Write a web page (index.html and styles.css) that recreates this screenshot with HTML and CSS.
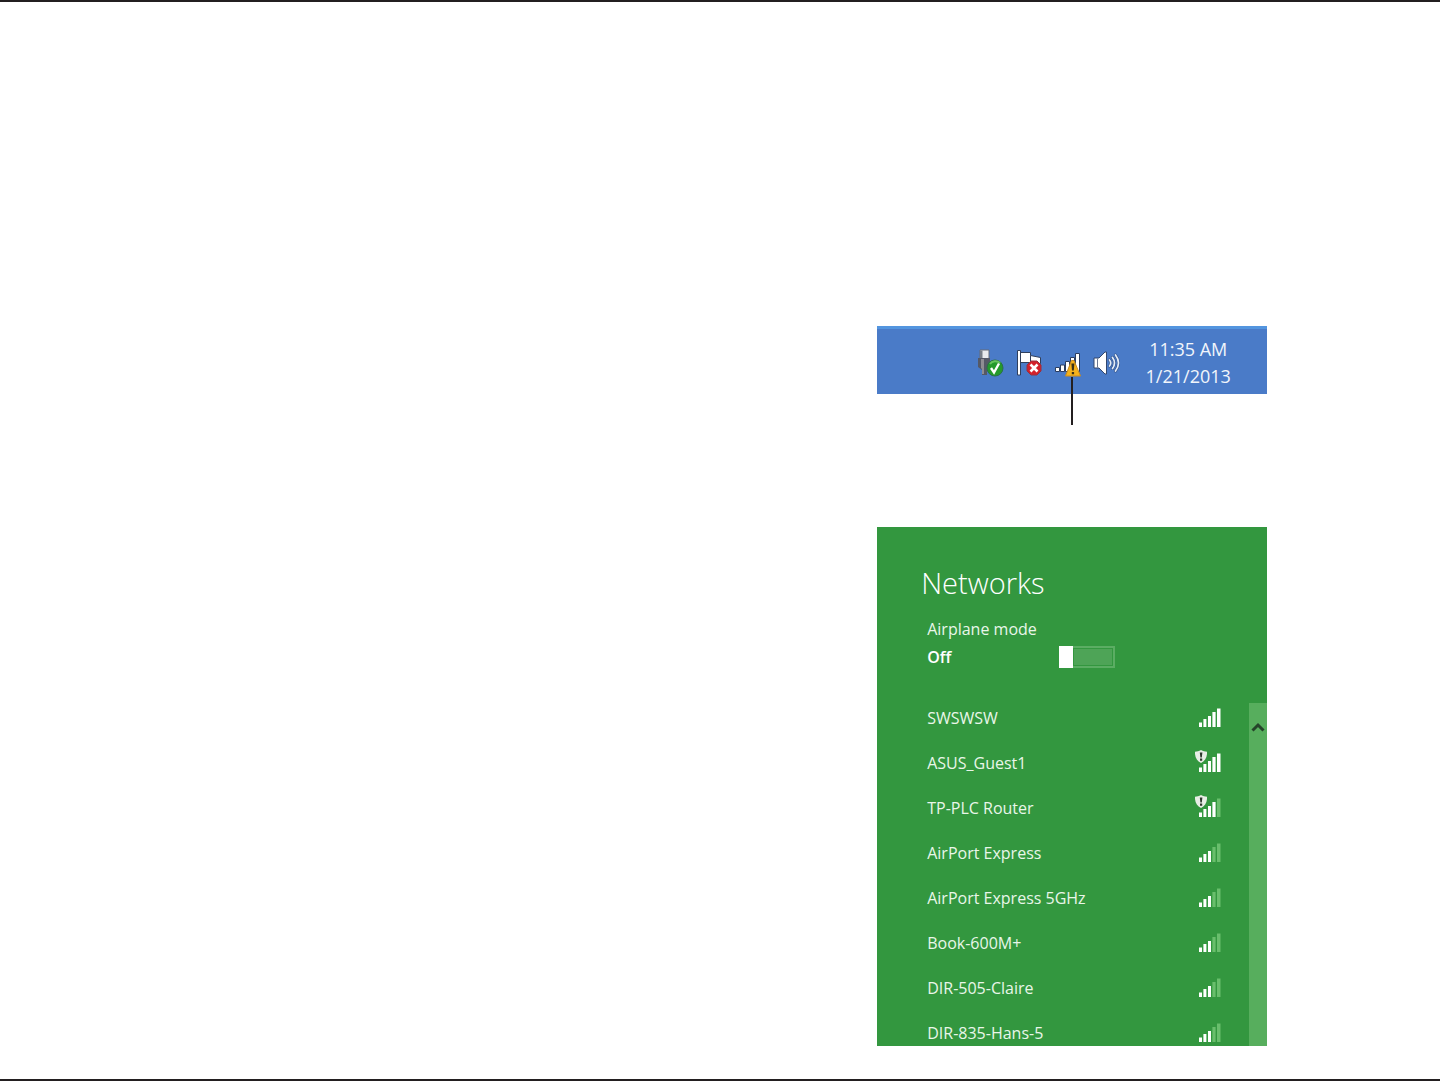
FILE: index.html
```html
<!DOCTYPE html>
<html lang="en">
<head>
<meta charset="utf-8">
<title>Networks</title>
<link rel="stylesheet" href="styles.css">
</head>
<body>
<svg class="defs" aria-hidden="true">
  <symbol id="shield" viewBox="0 0 12 13">
    <path d="M6 0C8 1.3 10 1.7 12 1.7C12.400 7 10 11.300 6 13C2 11.300 -.4 7 0 1.700C2 1.700 4 1.300 6 0Z" fill="#e8eee6"/>
    <path d="M4.800 2.500h2.600l-.6 5.100H5.400zM5 8.600h2.200v2.200H5z" fill="#2c382c"/>
  </symbol>
  <symbol id="full" viewBox="0 0 26 25">
    <path fill="#fff" d="M4 17.500h3V22H4zM8.400 14h3v8h-3zM13 11h3v11h-3zM17.400 7h3.200v15h-3.200zM22 3.500h3.500V22H22z"/>
  </symbol>
  <symbol id="four" viewBox="0 0 26 25">
    <path fill="#fff" d="M4 17.500h3V22H4zM8.400 14h3v8h-3zM13 11h3v11h-3zM17.400 7h3.200v15h-3.200z"/>
    <path fill="#69be6c" d="M22 3.500h3.500V22H22z"/>
  </symbol>
  <symbol id="three" viewBox="0 0 26 25">
    <path fill="#fff" d="M4 17.500h3V22H4zM8.400 14h3v8h-3zM13 11h3v11h-3z"/>
    <path fill="#69be6c" d="M17.400 7h3.200v15h-3.200zM22 3.500h3.500V22H22z"/>
  </symbol>
</svg>
<main class="page">
  <section class="tray" aria-label="Taskbar">
    <div class="tray-icons">
      <button class="tray-icon" aria-label="Safely remove hardware">
        <svg viewBox="0 0 28 32">
          <path d="M4 2h9v9H4z" fill="#e9ebed" stroke="#676d78"/>
          <path d="M4 2.500h2.500V11H4z" fill="#777e87"/>
          <path d="M2 10h12v9l-3 2v6H6v-5l-4-3z" fill="#555966"/>
          <path d="M5 11h3v15H6v-5l-1-1z" fill="#8f8d93"/>
          <circle cx="19" cy="20" r="8" fill="#249a2c" stroke="#2b7048"/>
          <path d="M14 16a6 5 0 0 1 10-1" fill="none" stroke="#65c35e" stroke-width="2"/>
          <path d="M15 20l3 4.500 5-9" fill="none" stroke="#fff" stroke-width="2.400"/>
        </svg>
      </button>
      <button class="tray-icon" aria-label="Action Center">
        <svg viewBox="0 0 28 32">
          <path d="M5.500 4.500h10v3l10 2v6l-10-1H5.500z" fill="#fff" stroke="#303f5c"/>
          <path d="M15.500 7.500v7" fill="none" stroke="#303f5c"/>
          <path d="M2.500 2.500h3V27h-3z" fill="#fff" stroke="#303f5c"/>
          <path d="M16 13h6l4 4v6l-4 4h-6l-4-4v-6z" fill="#d3202a" stroke="#963040"/>
          <path d="M15.500 16.500l7 7m0-7l-7 7" stroke="#fff" stroke-width="2.600"/>
        </svg>
      </button>
      <button class="tray-icon" aria-label="Network, limited connection">
        <svg viewBox="0 0 28 32">
          <path d="M1.500 19.500h4v4h-4zM6.500 17h4v6.500h-4zM11.500 13.500h4v10h-4zM16.500 9.500h4v14h-4zM21.500 5.500h4v18h-4z" fill="#fff" stroke="#2b3d60"/>
          <path d="M17.500 12.500h2.500l6.500 15.500H11.500z" fill="#f5b21b" stroke="#c98b20"/>
          <path d="M17.400 15.500h3l-.6 7h-1.800zM17.800 24h2.300v2.300h-2.300z" fill="#3c3115"/>
        </svg>
      </button>
      <button class="tray-icon" aria-label="Volume">
        <svg viewBox="0 0 28 32">
          <path d="M1 10h5l6-6h1.500v22H12l-6-6H1z" fill="#fff" stroke="#33476d"/>
          <path d="M4.500 10.500v9" stroke="#6c7790"/>
          <g fill="none" stroke-linecap="round">
            <path d="M16.500 12q2.500 3 0 6M19.500 9.500q4 5.500 0 11M22.500 7q6 8 0 16" stroke="#36558d" stroke-width="3"/>
            <path d="M16.500 12q2.500 3 0 6M19.500 9.500q4 5.500 0 11M22.500 7q6 8 0 16" stroke="#e3edfa" stroke-width="1.700"/>
          </g>
        </svg>
      </button>
    </div>
    <div class="clock"><time>11:35 AM</time><time>1/21/2013</time></div>
    <span class="leader"></span>
  </section>

  <section class="networks">
    <h1>Networks</h1>
    <div class="airplane">
      <label for="airplane">Airplane mode</label>
      <div class="state"><b>Off</b><input class="toggle" type="checkbox" id="airplane"></div>
    </div>
    <div class="list-area">
      <ul class="list">
        <li><button>SWSWSW<svg viewBox="0 0 26 25"><use href="#full"/></svg></button></li>
        <li><button>ASUS_Guest1<svg viewBox="0 0 26 25"><use href="#full"/><use href="#shield" width="12" height="13"/></svg></button></li>
        <li><button>TP-PLC Router<svg viewBox="0 0 26 25"><use href="#four"/><use href="#shield" width="12" height="13"/></svg></button></li>
        <li><button>AirPort Express<svg viewBox="0 0 26 25"><use href="#three"/></svg></button></li>
        <li><button>AirPort Express 5GHz<svg viewBox="0 0 26 25"><use href="#three"/></svg></button></li>
        <li><button>Book-600M+<svg viewBox="0 0 26 25"><use href="#three"/></svg></button></li>
        <li><button>DIR-505-Claire<svg viewBox="0 0 26 25"><use href="#three"/></svg></button></li>
        <li><button>DIR-835-Hans-5<svg viewBox="0 0 26 25"><use href="#three"/></svg></button></li>
      </ul>
      <div class="scrollbar">
        <button aria-label="Scroll up"><svg viewBox="0 0 14 10"><path d="M1.500 8.500L7 3l5.500 5.500" fill="none" stroke="#25442a" stroke-width="3"/></svg></button>
      </div>
    </div>
  </section>
</main>
</body>
</html>
```
FILE: styles.css
```css
* { box-sizing: border-box; }
body {
  margin: 0;
  background: #fff;
  font-family: "Open Sans", "Noto Sans", sans-serif;
  font-size: 16px;
}
button {
  border: 0;
  padding: 0;
  background: none;
  color: inherit;
  font: inherit;
  cursor: pointer;
}
svg { display: block; }
.defs { position: absolute; width: 0; height: 0; }
.page {
  display: flex;
  flex-direction: column;
  align-items: flex-end;
  gap: 133px;
  min-height: 100vh;
  padding: 324px 12% 33px 24px;
  border-top: 2px solid #231f20;
  border-bottom: 2px solid #231f20;
}
.tray, .networks { width: 100%; max-width: 390px; }

.tray {
  position: relative;
  display: flex;
  justify-content: flex-end;
  align-items: flex-start;
  gap: 22px;
  padding: 7px 34px 4px 0;
  border-top: 3px solid #5395df;
  background: #4a7bc8;
}
.tray-icons { display: flex; gap: 11px; padding-top: 12px; }
.tray-icon svg { width: 28px; height: 32px; }
.clock {
  display: flex;
  flex-direction: column;
  align-items: center;
  width: 90px;
  color: #f1f5fb;
  font-size: 18px;
  line-height: 27px;
}
.leader {
  position: absolute;
  right: 194px;
  bottom: -31px;
  width: 2px;
  height: 48px;
  background: #231f20;
}

.networks { padding-top: 36px; background: #33973f; color: #e9f6e9; }
h1 {
  margin: 0 0 12px;
  padding-left: 44px;
  color: #fff;
  font-size: 29px;
  font-weight: 300;
  line-height: 40px;
}
.airplane { padding-left: 50px; line-height: 28px; }
.airplane label { display: block; }
.state { display: flex; align-items: center; }
.state b { width: 132px; color: #fff; font-weight: 600; }
/* Knob, track fill and track inset, stacked over the frame colour */
.toggle {
  appearance: none;
  width: 56px;
  height: 22px;
  margin: 0;
  background:
    linear-gradient(#fff, #fff) 0 0 / 14px 22px no-repeat,
    linear-gradient(#4ea457, #4ea457) 15px 3px / 38px 16px no-repeat,
    linear-gradient(#33973f, #33973f) 14px 2px / 40px 18px no-repeat,
    #5bad63;
}
.list-area { display: flex; margin-top: 24px; }
.list {
  flex: 1;
  max-height: 351px;
  margin: 0;
  padding: 0 28px 0 50px;
  overflow: hidden;
  list-style: none;
}
.list button {
  display: flex;
  justify-content: space-between;
  align-items: center;
  width: 100%;
  height: 45px;
}
.list svg { width: 26px; height: 25px; }
.scrollbar { width: 18px; margin-top: 8px; background: #57ae5d; }
.scrollbar button { display: grid; place-items: center; width: 100%; height: 48px; }
.scrollbar svg { width: 14px; height: 10px; }
```
